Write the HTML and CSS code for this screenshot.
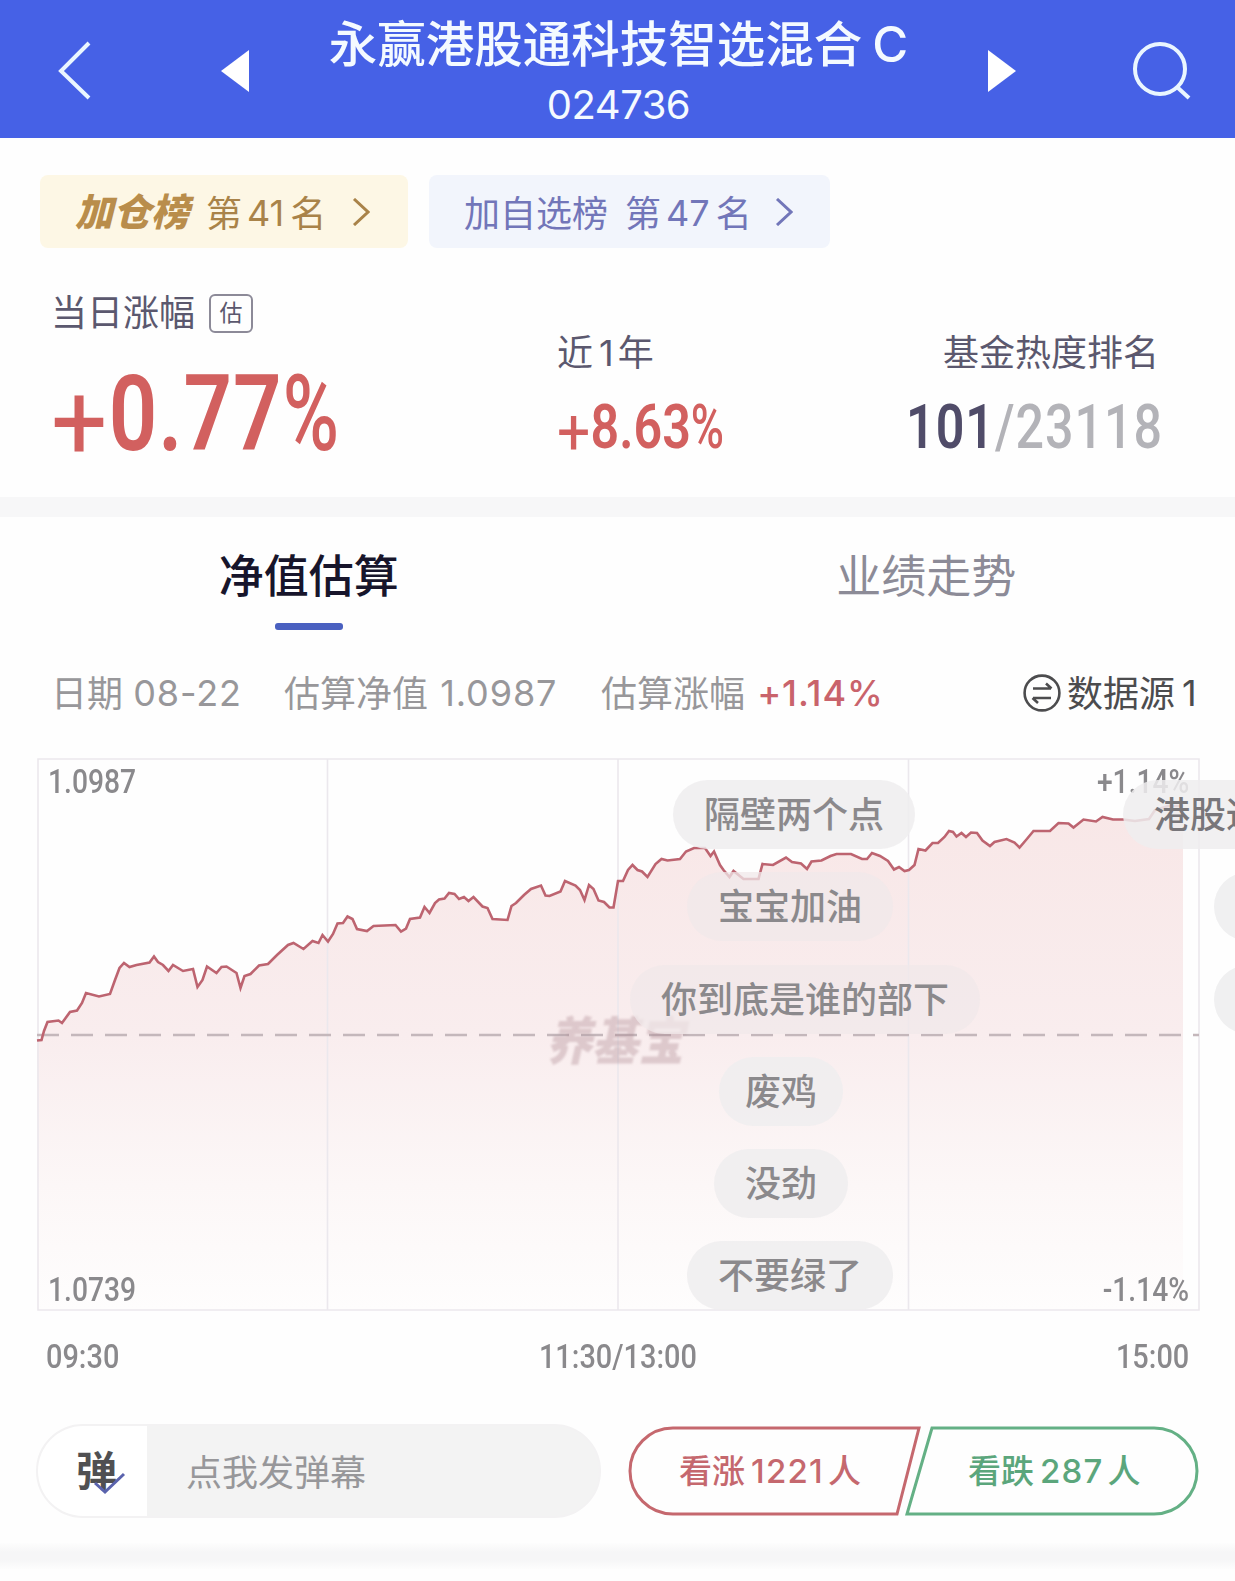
FILE: index.html
```html
<!DOCTYPE html>
<html lang="zh-CN">

<head>
    <meta charset="UTF-8">
    <meta name="viewport" content="width=device-width, initial-scale=1.0">
    <title>永赢港股通科技智选混合C</title>
    <link rel="stylesheet" href="styles.css">
</head>

<body>
    <header class="header">
        <svg class="back" width="40" height="64" viewBox="0 0 40 64"><path d="M34 5 6 33 34 60" /></svg>
        <svg class="prev" width="28" height="42" viewBox="0 0 28 42"><path d="M28 0V42L0 21z" /></svg>
        <div class="fund">
            <h1 class="fund-name">永赢港股通科技智选混合<span class="fund-class">C</span></h1>
            <div class="fund-code">024736</div>
        </div>
        <svg class="next" width="28" height="42" viewBox="0 0 28 42"><path d="M0 0V42L28 21z" /></svg>
        <svg class="search" width="60" height="64" viewBox="0 0 60 64">
            <circle cx="28" cy="28" r="25" />
            <path d="M45 46 57 57" />
        </svg>
    </header>

    <!-- 榜单 -->
    <div class="ranks">
        <div class="rank rank-gold">
            <b class="rank-logo">加仓榜</b>
            <span class="rank-text">第<i class="num">41</i>名</span>
            <svg width="18" height="28" viewBox="0 0 18 28"><path d="M2 1 16 14 2 27" /></svg>
        </div>
        <div class="rank rank-blue">
            <span class="rank-title">加自选榜</span>
            <span class="rank-text">第<i class="num">47</i>名</span>
            <svg width="18" height="28" viewBox="0 0 18 28"><path d="M2 1 16 14 2 27" /></svg>
        </div>
    </div>

    <!-- 涨幅 -->
    <section class="stats">
        <div class="stat stat-day">
            <div class="stat-label">当日涨幅<span class="est">估</span></div>
            <div class="din day-value"><span class="plus">+</span>0.77<span class="pct">%</span></div>
        </div>
        <div class="stat stat-year">
            <div class="stat-label">近<i class="num">1</i>年</div>
            <div class="din year-value"><span class="plus">+</span>8.63<span class="pct">%</span></div>
        </div>
        <div class="stat stat-hot">
            <div class="stat-label">基金热度排名</div>
            <div class="din hot-value"><b>101</b>/23118</div>
        </div>
    </section>
    <div class="divider"></div>

    <nav class="tabs">
        <div class="tab active">净值估算</div>
        <div class="tab">业绩走势</div>
    </nav>

    <div class="info">
        <span class="info-date">日期 <i class="num">08-22</i></span>
        <span class="info-value">估算净值 <i class="num">1.0987</i></span>
        <span class="info-rate">估算涨幅 <b class="num">+1.14%</b></span>
        <span class="source">
            <svg width="38" height="38" viewBox="0 0 38 38">
                <circle cx="19" cy="19" r="17.4" />
                <path d="M10 14.500H28M23 9.500 28.500 14.500M28 24H10M15 29 9.500 24" />
            </svg>
            数据源<i class="num">1</i>
        </span>
    </div>

    <!-- 走势图 -->
    <div class="chart">
        <svg class="plot" width="1235" height="560" viewBox="0 755 1235 560">
            <defs>
                <linearGradient id="area" gradientUnits="userSpaceOnUse" x1="0" y1="810" x2="0" y2="1310">
                    <stop offset="0" stop-color="#f8e7e7" />
                    <stop offset="0.45" stop-color="#f9edee" />
                    <stop offset="0.75" stop-color="#fcf7f7" />
                    <stop offset="1" stop-color="#fefdfd" />
                </linearGradient>
            </defs>
            <path id="fill" class="fill" fill="url(#area)" />
            <path class="grid" d="M38 759H1199V1310H38zM327.500 759V1310M618 759V1310M908.500 759V1310" />
            <path class="zero" d="M37 1035H1199" />
            <polyline id="line" class="line" points="37,1040.500 41.500,1040 44,1031 47.500,1022 58.500,1020.500 62,1023 70,1012 77,1010.500 82,1003 86,993 99,996.500 110,994 115,980 119.500,968 124,963 129.500,967 136.500,965 149.500,962.500 154,956.500 158,962 163,965 168.500,971 173,965 183,971 193,969 197.500,987 202.500,980 207,966.500 216.500,973 221.500,967 226.500,966.500 236.500,973 240.500,988 244.500,976 250.500,974 259,965.500 268,964 277,955 288,945 293.500,943 303.500,949 312.500,941 318.500,943 322.500,935 328,941.500 333,934 337.500,923.500 343,923 347.500,916.500 352.500,919 357,929 367,931 373.500,926 395.500,925 401,931.500 406,928.500 410,919 420,917.500 424.500,907 429.500,913 435,903 439,899.500 444.500,898.500 449,893 454.500,894 459,899 464,897 468.500,901 473.500,897 482.500,906.500 487.500,908 492.500,919 507.500,920 511.500,906 516,903 524,895 531,889 541,885.500 545.500,895.500 549.500,896 560.500,891.500 565,881 575.500,885.500 580,890 584.500,900 589,885 593.500,889 598.500,900.500 604,902 609.500,907.500 613.500,907.500 618,881 623,881 628,870 632.500,865 637.500,870 642,871.500 647.500,877 655.500,864 661.500,859 667.500,860.500 680,859 686,851.500 694,848 705,848 710.500,856 714,851.500 720,865 723.500,870 729.500,877 733.500,871 743.500,879 758.500,879 762.500,864 773,865 786,857.500 792,862 801,863.500 807,869 811.500,861.500 821.500,860.500 830.500,856 836.500,854 851,854 862,859 867,859 872,853 880,856 888,861 894,869.500 899,867 904.500,871 909,870 914.500,865 918.500,849 925.500,850.500 932.500,843 938,843 944.500,837 949,831 953,832 956.500,836.500 961.500,833 966,837 971,832.500 977,833 982.500,840.500 990,846 994.500,842 1006.500,839 1014.500,842.500 1019.500,847.500 1026,840 1033.500,831 1050,831 1058.500,823 1068.500,823.500 1073.500,827.500 1083.500,819.500 1096,821.500 1102.500,817 1113,819.500 1123,819.500 1135,821 1149,819 1155,810 1168,806 1183,806" />
        </svg>
        <span class="din mark mark-tl">1.0987</span>
        <span class="din mark mark-tr">+1.14%</span>
        <span class="din mark mark-bl">1.0739</span>
        <span class="din mark mark-br">-1.14%</span>
        <span class="watermark">养基宝</span>
        <!-- 弹幕 -->
        <div class="danmu">
            <span class="bullet row1">隔壁两个点</span>
            <span class="bullet row2">宝宝加油</span>
            <span class="bullet row3">你到底是谁的部下</span>
            <span class="bullet row4">废鸡</span>
            <span class="bullet row5">没劲</span>
            <span class="bullet row6">不要绿了</span>
            <span class="bullet row1 next-one">港股通</span>
            <span class="bullet row2 edge"></span>
            <span class="bullet row3 edge"></span>
        </div>
    </div>
    <div class="times">
        <span class="din t-left">09:30</span>
        <span class="din t-mid">11:30/13:00</span>
        <span class="din t-right">15:00</span>
    </div>

    <div class="actions">
        <div class="send">
            <div class="send-switch">弹
                <svg class="check" width="34" height="24" viewBox="0 0 34 24"><path d="M2 11 12 20 31 2" /></svg>
            </div>
            <div class="send-input">点我发弹幕</div>
        </div>
        <div class="vote">
            <svg class="vote-bg" width="572" height="92" viewBox="0 0 572 92">
                <path class="up-line" d="M45 3H291L269 89H45A43 43 0 0 1 45 3z" />
                <path class="down-line" d="M304 3H526A43 43 0 0 1 526 89H279z" />
            </svg>
            <div class="up">看涨<i class="num">1221</i>人</div>
            <div class="down">看跌<i class="num">287</i>人</div>
        </div>
    </div>
    <div class="divider-bottom"></div>

    <script>
        // 用折线的点生成下方的填充区域
        const points = document.getElementById('line').getAttribute('points');
        document.getElementById('fill').setAttribute('d', 'M38 1310L' + points + ' 1183,1310z');
    </script>
</body>

</html>
```
FILE: styles.css
```css
* {
    box-sizing: border-box;
}

body {
    margin: 0;
    width: 1235px;
    height: 1581px;
    overflow: hidden;
    background: #fefefe;
    font-family: Inter, "Noto Sans CJK SC", sans-serif;
    font-size: 36px;
}

svg {
    display: block;
    flex: none;
}

.num {
    font-style: normal;
}

.din {
    font-family: Roboto, "Noto Sans CJK SC", sans-serif;
    white-space: nowrap;
    transform: scaleX(0.81);
    transform-origin: left center;
}

/* 顶部 */
.header {
    display: flex;
    height: 138px;
    background: #4661e6;
    color: #f4faff;
}

.back {
    margin: 38px 0 0 55px;
    fill: none;
    stroke: #eaf6ff;
    stroke-width: 4;
}

.prev {
    margin: 50px 0 0 126px;
    fill: #fff;
}

.fund {
    width: 739px;
    text-align: center;
}

.fund-name {
    margin: 15px 0 0;
    font-size: 48.5px;
    line-height: 60px;
    font-weight: 500;
    white-space: nowrap;
}

.fund-class {
    margin-left: 10px;
    font-size: 49px;
    font-weight: 500;
}

.fund-code {
    font-size: 40px;
    line-height: 60px;
    letter-spacing: -0.5px;
}

.next {
    margin: 50px 0 0;
    fill: #fff;
}

.search {
    margin: 41px 0 0 116px;
    fill: none;
    stroke: #eaf6ff;
    stroke-width: 4;
}

/* 榜单 */
.ranks {
    display: flex;
    gap: 21px;
    padding: 37px 0 0 40px;
}

.rank {
    display: flex;
    align-items: center;
    height: 73px;
    border-radius: 8px;
    line-height: 50px;
    white-space: nowrap;
}

.rank svg {
    fill: none;
    stroke: currentColor;
    stroke-width: 3;
}

.rank-gold {
    width: 368px;
    padding-left: 35px;
    background: #fdf7e5;
    color: #a98349;
}

.rank-blue {
    width: 401px;
    padding-left: 35px;
    background: #f2f5fc;
    color: #7276b9;
}

.rank-logo {
    width: 131px;
    font-size: 38px;
    font-weight: 900;
    font-style: italic;
    color: #b98d4b;
}

.rank-title {
    width: 161px;
    padding-top: 4px;
}

.rank-text {
    width: 150px;
    padding-top: 4px;
}

.rank-gold .rank-text {
    width: 146px;
}

.rank .num {
    position: relative;
    top: -1px;
    margin: 0 6px 0 5px;
}

/* 涨幅 */
.stats {
    display: flex;
    height: 249px;
    color: #5b586e;
}

.stat-label {
    display: flex;
    align-items: center;
    line-height: 40px;
    white-space: nowrap;
}

.stat-label .num {
    margin: 0 4px 0 6px;
}

.stat-day {
    width: 503px;
    padding: 45px 0 0 51px;
}

.est {
    width: 44px;
    height: 39px;
    margin-left: 14px;
    border: 2px solid #8c8a98;
    border-radius: 6px;
    font-size: 23px;
    line-height: 34px;
    text-align: center;
}

.day-value {
    margin-top: 22px;
    color: #d2605f;
    font-size: 105px;
    font-weight: 600;
    line-height: 120px;
    letter-spacing: 1.2px;
}

/* 加号比数字细, 底部与数字对齐 */
.plus {
    display: inline-block;
    font-weight: 400;
    transform: translate(0, 0.08em) scale(1.17, 1.03);
    transform-origin: left center;
    margin-right: 0.1em;
}

.stat-year {
    width: 385px;
    padding: 85px 0 0 54px;
}

.year-value {
    margin-top: 19px;
    color: #d2605f;
    font-size: 62px;
    font-weight: 600;
    line-height: 70px;
}

.pct {
    display: inline-block;
    font-weight: 500;
    transform: scaleX(0.9);
    transform-origin: left center;
}

.stat-hot {
    width: 271px;
    padding: 85px 0 0;
}

.stat-hot .stat-label {
    justify-content: flex-end;
}

.hot-value {
    margin: 19px 0 0 18px;
    color: #b3b3b8;
    font-size: 62px;
    font-weight: 500;
    line-height: 70px;
    letter-spacing: 1.2px;
}

.hot-value b {
    color: #504c69;
    font-weight: 600;
}

.divider {
    height: 20px;
    background: #f7f7f8;
}

/* 标签页 */
.tabs {
    display: flex;
    height: 129px;
}

.tab {
    flex: 1;
    padding-top: 30px;
    color: #8c8b97;
    font-size: 45px;
    line-height: 60px;
    text-align: center;
}

.tab.active {
    color: #17152b;
    font-weight: 500;
}

.tab.active::after {
    content: "";
    display: block;
    width: 68px;
    height: 7px;
    margin: 16px auto 0;
    border-radius: 3px;
    background: #4a60c0;
}

/* 估值信息 */
.info {
    display: flex;
    align-items: center;
    height: 96px;
    padding-left: 51px;
    color: #98979a;
    line-height: 50px;
    white-space: nowrap;
}

.info .num {
    position: relative;
    top: -1px;
    letter-spacing: 0.9px;
}

.info-date {
    width: 233px;
}

.info-value {
    width: 317px;
}

.info-value .num,
.info-rate .num {
    margin-left: 2px;
}

.info-rate {
    width: 422px;
}

.info-rate b {
    color: #c9636b;
    font-weight: 500;
}

.source {
    display: flex;
    align-items: center;
    color: #4c4c4e;
}

.source svg {
    margin: -3px 6px 0 0;
    fill: none;
    stroke: #4c4c4e;
    stroke-width: 2.6;
}

.source .num {
    margin-left: 7px;
}

/* 走势图 */
.chart {
    position: relative;
    height: 573px;
    padding-top: 17px;
    margin-top: -4px;
    overflow: hidden;
}

.grid {
    fill: none;
    stroke: #ebe8ed;
    stroke-width: 1.6;
}

.zero {
    stroke: #c4b7bb;
    stroke-width: 2.6;
    stroke-dasharray: 22 12;
}

.line {
    fill: none;
    stroke: #bd6470;
    stroke-width: 2.6;
}

.mark {
    position: absolute;
    color: #8a898c;
    font-size: 34px;
    font-weight: 500;
    line-height: 40px;
    transform: scaleX(0.83);
}

.mark-tl {
    top: 23px;
    left: 48px;
}

.mark-tr {
    top: 23px;
    right: 46px;
    transform-origin: right center;
}

.mark-bl {
    top: 531px;
    left: 48px;
}

.mark-br {
    top: 531px;
    right: 46px;
    transform-origin: right center;
}

.watermark {
    position: absolute;
    top: 267px;
    left: 546px;
    color: rgba(166, 128, 138, 0.34);
    font-size: 46px;
    font-weight: 900;
    font-style: italic;
    transform: scaleY(1.12);
    filter: blur(1px);
}

.bullet {
    position: absolute;
    height: 69px;
    padding: 0 31px;
    border-radius: 35px;
    background: rgba(238, 237, 239, 0.85);
    color: #8b898c;
    line-height: 71px;
    font-weight: 500;
    white-space: nowrap;
}

.row1 {
    top: 42px;
    left: 673px;
}

.row2 {
    top: 134px;
    left: 687px;
    background: rgba(240, 232, 233, 0.75);
}

.row3 {
    top: 227px;
    left: 630px;
    background: rgba(240, 232, 234, 0.75);
}

.row4 {
    top: 319px;
    left: 719px;
    padding: 0 26px;
}

.row5 {
    top: 411px;
    left: 714px;
}

.row6 {
    top: 503px;
    left: 687px;
}

.next-one {
    left: 1123px;
    color: #78767a;
}

.edge {
    left: 1214px;
    width: 120px;
    background: #f0f0f1;
}

.times {
    display: flex;
    justify-content: space-between;
    height: 113px;
    padding: 25px 46px 0;
    color: #8a898c;
    font-size: 34px;
    font-weight: 500;
    line-height: 40px;
}

.times .din {
    transform: scaleX(0.85);
}

.t-mid {
    transform-origin: center;
}

.t-right {
    transform-origin: right center;
}

/* 底部操作 */
.actions {
    display: flex;
    height: 119px;
}

.send {
    display: flex;
    width: 565px;
    height: 94px;
    margin-left: 36px;
    border: 2px solid #f3f2f3;
    border-radius: 47px;
    background: #f3f3f3;
    overflow: hidden;
}

.send-switch {
    position: relative;
    width: 109px;
    padding-left: 38px;
    background: #fff;
    color: #505052;
    font-size: 41px;
    font-weight: 700;
    line-height: 90px;
}

.check {
    position: absolute;
    left: 55px;
    top: 46px;
    fill: none;
    stroke: #5a63ad;
    stroke-width: 3;
}

.send-input {
    padding-left: 39px;
    color: #97979a;
    line-height: 95px;
}

.vote {
    position: relative;
    display: flex;
    width: 572px;
    height: 92px;
    margin: 1px 0 0 27px;
    font-size: 33px;
    font-weight: 500;
    line-height: 93px;
}

.vote-bg {
    position: absolute;
    inset: 0;
    fill: none;
    stroke-width: 3;
}

.up-line {
    stroke: #c5686e;
}

.down-line {
    stroke: #64b085;
}

.up {
    width: 289px;
    padding-left: 51px;
    color: #c5686e;
}

.down {
    padding-left: 51px;
    color: #5ba67c;
}

.vote .num {
    margin: 0 4px 0 6px;
    letter-spacing: 1.2px;
}

.divider-bottom {
    height: 26px;
    background: linear-gradient(#fdfdfd, #f6f6f7 35%, #f6f6f7 65%, #fdfdfd);
}
```
